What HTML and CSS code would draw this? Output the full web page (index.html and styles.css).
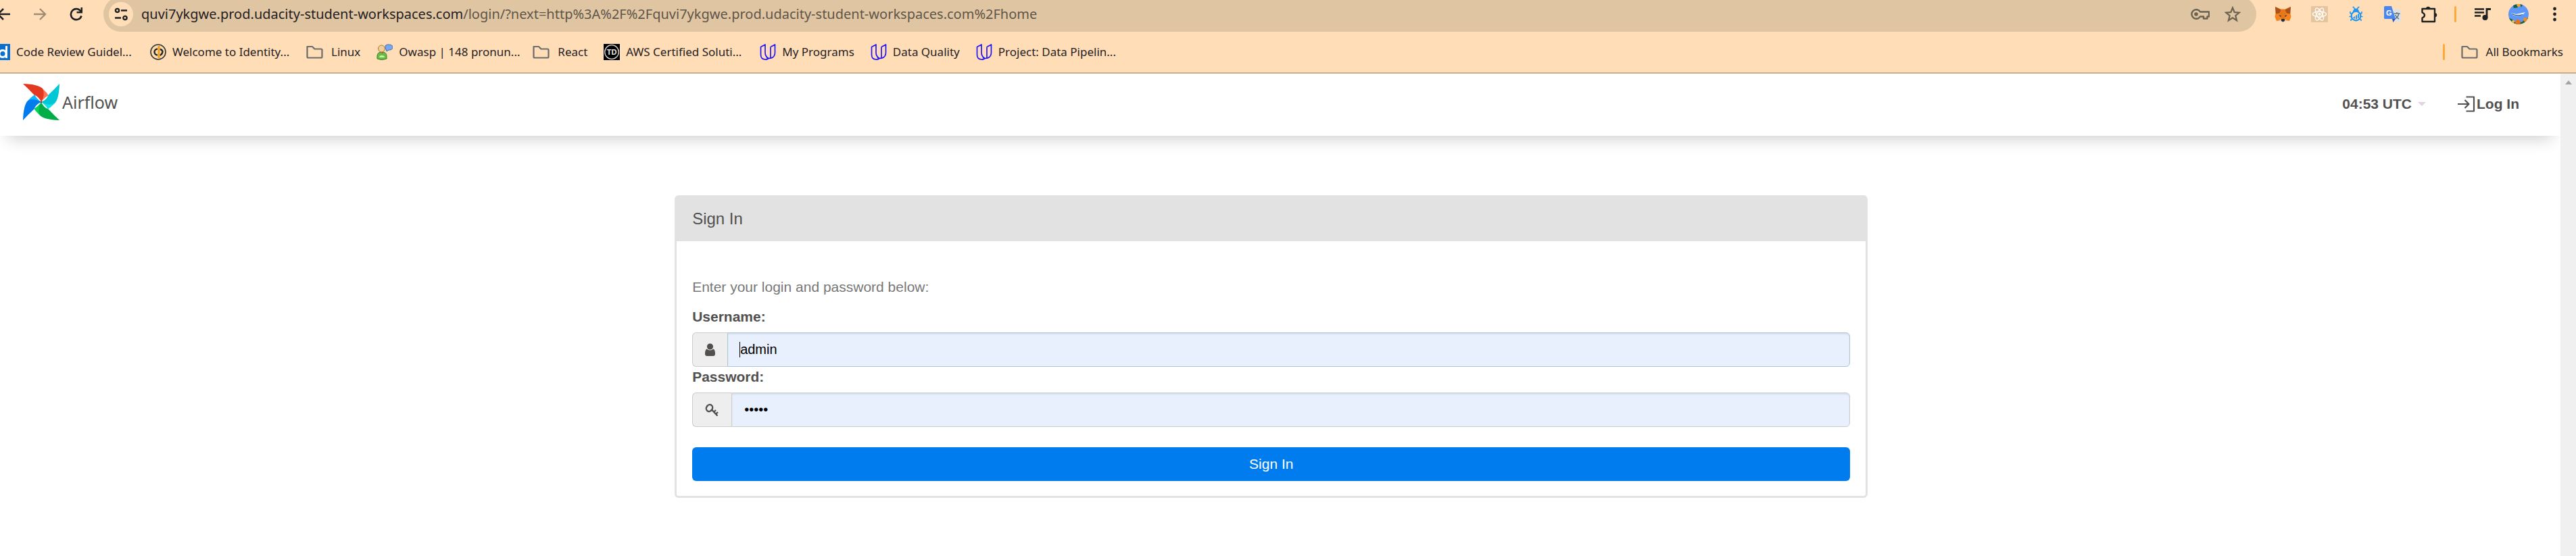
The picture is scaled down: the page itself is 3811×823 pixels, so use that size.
FILE: index.html
```html
<!DOCTYPE html>
<html lang="en">
<head>
<meta charset="utf-8">
<title>Airflow - Sign In</title>
<link rel="stylesheet" href="styles.css">
</head>
<body>
<svg class="defs" width="0" height="0" aria-hidden="true">
  <symbol id="folder" viewBox="0 0 25 24"><path d="M2 4h7l3.500 3.500H22q1.500 0 1.500 1.500V19q0 1.500-1.500 1.500H3Q1.500 20.500 1.500 19V4z" fill="none" stroke="#6b6b6b" stroke-width="2.200" stroke-linejoin="round"/></symbol>
  <symbol id="udacity" viewBox="0 0 24 24"><path d="M1.500 4.500 8 1v12q0 5.500 5 8.500-2 1.800-5 1.500-6.500-.5-6.500-7zM16 4.500 22.500 1v12q0 6-5.500 8-4 1.200-7-1M16 4.500v17" fill="none" stroke="#2015ff" stroke-width="1.700" stroke-linejoin="round"/></symbol>
</svg>
<header class="browser">
  <div class="toolbar">
    <nav class="history">
      <button aria-label="Back"><svg width="20" height="20" viewBox="0 0 20 20"><path d="M20 10H2M10 2l-8 8 8 8" fill="none" stroke="#1f2023" stroke-width="2.600"/></svg></button>
      <button aria-label="Forward"><svg width="20" height="20" viewBox="0 0 20 20"><path d="M1 10h17M10 2l8 8-8 8" fill="none" stroke="#a08c73" stroke-width="2.400"/></svg></button>
      <button aria-label="Reload"><svg width="20" height="20" viewBox="0 0 20 20"><path d="M17.500 12.500A8 8 0 1 1 17 6.500" fill="none" stroke="#1f2023" stroke-width="2.600"/><path d="M19 0v8.500h-8.500V6h6V0z" fill="#1f2023"/></svg></button>
    </nav>
    <div class="omnibox">
      <button class="site-info" aria-label="Site information"><svg width="20" height="20" viewBox="0 0 20 20"><g fill="none" stroke="#1f2023" stroke-width="2.400"><circle cx="4.500" cy="4.500" r="2.600"/><path d="M10 4.500h9M1 15.500h9"/><circle cx="16" cy="15.500" r="2.600"/></g></svg></button>
      <div class="url">quvi7ykgwe.prod.udacity-student-workspaces.com<span>/login/?next=http%3A%2F%2Fquvi7ykgwe.prod.udacity-student-workspaces.com%2Fhome</span></div>
      <div class="omnibox-actions">
        <button aria-label="Passwords"><svg width="28" height="24" viewBox="0 0 28 24"><path d="M14 8.500A6.800 6.800 0 1 0 14 15.500h5v3h5.500v-3H27v-7z" fill="none" stroke="#6c6252" stroke-width="2.400" stroke-linejoin="round"/><circle cx="8" cy="12" r="2.800" fill="#6c6252"/></svg></button>
        <button aria-label="Bookmark this tab"><svg width="24" height="24" viewBox="0 0 24 24"><path d="M12 2.500l2.700 6.600 7.100.5-5.500 4.600 1.800 7-6.100-3.900-6.100 3.900 1.800-7-5.500-4.600 7.100-.5z" fill="none" stroke="#6c6252" stroke-width="2.200"/></svg></button>
      </div>
    </div>
    <div class="extensions">
      <button aria-label="MetaMask"><svg width="25" height="24" viewBox="0 0 25 24"><path d="M1 1l8.500 3.500h6L24 1l-.5 10 1 5-2.500 6-6-.5h-7L3 22 .5 16l1-5z" fill="#f5841f"/><path d="M1 1l8.500 4.500-2 5L2 11.500zM24 1l-8.500 4.500 2 5 5.500 1z" fill="#a9501c"/><path d="M9.500 5h6l2 9-5 7-5-7z" fill="#e9761b"/><path d="M6 13l4 1.500-1 1.500zM19 13l-4 1.500 1 1.500z" fill="#333"/><path d="M10 19h5v3l-2.500 1.500L10 22z" fill="#2b2b2b"/><path d="M5 21.500l5-2v3zM20 21.500l-5-2v3z" fill="#d7c1b3"/></svg></button>
      <button aria-label="React Developer Tools"><svg width="25" height="24" viewBox="0 0 25 24"><rect width="25" height="24" rx="1" fill="#e3c59f"/><g fill="none" stroke="#fff8ef" stroke-width="1.500"><ellipse cx="12.500" cy="12" rx="10" ry="4"/><ellipse cx="12.500" cy="12" rx="10" ry="4" transform="rotate(60 12.500 12)"/><ellipse cx="12.500" cy="12" rx="10" ry="4" transform="rotate(120 12.500 12)"/></g><circle cx="12.500" cy="12" r="2.200" fill="#fff8ef"/></svg></button>
      <button aria-label="Bug tracker"><svg width="25" height="24" viewBox="0 0 25 24"><g fill="none" stroke="#1e96f5" stroke-width="1.600"><path d="M7.500 1.500H9l2 3.500M17.500 1.500H16l-2 3.500M4 8v2.500l3 1.500M21 8v2.500L18 12M2.500 15.500H6M22.500 15.500H19M5 22v-2l3-1M20 22v-2l-3-1"/><circle cx="12.500" cy="14.500" r="6.800" stroke-width="2.200"/></g><path d="M8 8.500a4.500 5 0 0 1 9 0zM8 17l3-2v4zM12 14l2-1v6l-2 .5zM15 12l2-1v6l-2 1.500z" fill="#1e96f5"/></svg></button>
      <button aria-label="Translate"><svg width="25" height="24" viewBox="0 0 25 24"><path d="M9 5h14.500q1.500 0 1.500 1.500V22q0 1.500-1.500 1.500H15z" fill="#e1e1e1"/><path d="M14.500 11h9M19 9v2M22 11q-1 5-6 8M16.500 13q2 4 5.500 6" fill="none" stroke="#607988" stroke-width="1.500"/><path d="M12 19h5l-3.500 5z" fill="#3352b8"/><path d="M1.500 0H11l6 19H1.500Q0 19 0 17.500v-16Q0 0 1.500 0z" fill="#4a86f0"/><text x="3" y="13.500" class="glyph-g">G</text></svg></button>
      <button aria-label="Extensions"><svg width="26" height="26" viewBox="0 0 26 26"><path d="M2.500 5H21v19H2.500v-5.500Q6 17 6 14.500T2.500 10.500z" fill="none" stroke="#1f2023" stroke-width="2.400" stroke-linejoin="round"/><path d="M8 4.500a3.300 3.300 0 0 1 6.500 0zM21.500 11a3.300 3.300 0 0 1 0 6.500z" fill="#1f2023"/></svg></button>
    </div>
    <div class="browser-controls">
      <i class="divider"></i>
      <button aria-label="Media control"><svg width="25" height="24" viewBox="0 0 25 24"><path d="M1 4.500h14M1 9.500h14M1 14.500h9" stroke="#1f2023" stroke-width="2.400"/><path d="M19 17V4.500h6" fill="none" stroke="#1f2023" stroke-width="2.800"/><circle cx="16.500" cy="17" r="4" fill="#1f2023"/></svg></button>
      <button aria-label="Profile"><svg width="30" height="30" viewBox="0 0 30 30"><clipPath id="round"><circle cx="15" cy="15" r="15"/></clipPath><g clip-path="url(#round)"><path d="M0 0h30v30H0z" fill="#5e97f6"/><path d="M4 13q6 3 12 1l9-2-4 4q-9 3-15 0z" fill="#e8f1ff"/><path d="M5 14.500q8 4 16 1" stroke="#27466b" fill="none"/><path d="M7 2l5-2 2 5-6 1zM17 0l4 1-2 4z" fill="#155d3b"/><circle cx="15" cy="1.500" r="2.500" fill="#f5a623"/><path d="M0 20l6 3 3 4 5-2 6 2 4-5 6-2v11H0z" fill="#17603c"/><circle cx="14" cy="27" r="4" fill="#e8711a"/><circle cx="25" cy="23" r="3" fill="#f58a1f"/><circle cx="7" cy="26" r="2" fill="#f9c32b"/></g></svg></button>
      <button aria-label="Menu"><svg width="25" height="24" viewBox="0 0 25 24"><g fill="#1f2023"><circle cx="12.500" cy="4" r="2.400"/><circle cx="12.500" cy="12" r="2.400"/><circle cx="12.500" cy="20" r="2.400"/></g></svg></button>
    </div>
  </div>
  <nav class="bookmarks">
    <a href="#" class="long"><svg width="24" height="24" viewBox="0 0 24 24"><path d="M0 0h24v24H0z" fill="#0a6fd2"/><circle cx="13" cy="14.500" r="5" fill="none" stroke="#fff" stroke-width="3"/><path d="M18.500 3v18" stroke="#fff" stroke-width="3"/></svg>Code Review Guidel...</a>
    <a href="#" class="long"><svg width="24" height="24" viewBox="0 0 24 24"><circle cx="12" cy="12" r="11" fill="#fbdcae" stroke="#333" stroke-width="1.600"/><path d="M11 7.500a4.500 4.500 0 1 0 0 9M14.500 17q4-2 4-6-1-3-4-3" fill="none" stroke="#222" stroke-width="2.400"/><path d="M13 3v18" stroke="#f79a1c" stroke-width="3"/></svg>Welcome to Identity...</a>
    <a href="#" class="folder"><svg width="25" height="24"><use href="#folder"/></svg>Linux</a>
    <a href="#" class="long"><svg width="24" height="24" viewBox="0 0 24 24"><path d="M1 22v-4q0-6 7-6t7 6v4q-7 3-14 0z" fill="#67bd42" stroke="#3c7c25"/><path d="M4 20q0-3 4-3t4 3z" fill="#c5f2a6"/><path d="M7 12h3l-1.500 3z" fill="#d84a2b"/><circle cx="7.500" cy="7" r="5" fill="#f3cf94" stroke="#a8793d"/><path d="M14 8l1 3 3-2q6 0 6-4t-6-4-5 4q0 2 1 3z" fill="#77a9f2" stroke="#3b65b9"/></svg>Owasp | 148 pronun...</a>
    <a href="#" class="folder"><svg width="25" height="24"><use href="#folder"/></svg>React</a>
    <a href="#" class="long"><svg width="24" height="24" viewBox="0 0 24 24"><path d="M0 0h24v24H0z"/><circle cx="12" cy="12" r="10.300" fill="none" stroke="#ddd" stroke-width="1.300"/><text x="12" y="16" text-anchor="middle" class="glyph-td">TD</text></svg>AWS Certified Soluti...</a>
    <a href="#"><svg width="24" height="24"><use href="#udacity"/></svg>My Programs</a>
    <a href="#"><svg width="24" height="24"><use href="#udacity"/></svg>Data Quality</a>
    <a href="#" class="long"><svg width="24" height="24"><use href="#udacity"/></svg>Project: Data Pipelin...</a>
    <i class="divider"></i>
    <a href="#" class="folder"><svg width="25" height="24"><use href="#folder"/></svg>All Bookmarks</a>
  </nav>
</header>
<div class="viewport">
  <div class="page">
    <nav class="navbar">
      <a href="#" class="brand"><svg width="54" height="54" viewBox="0 0 160 160">
        <path d="M80 80Q90 50 87 22Q104 38 112 51Q94 60 80 80z" fill="#ff7557"/>
        <path d="M80 80Q110 90 138 87Q122 104 109 112Q100 94 80 80z" fill="#11e1ee"/>
        <path d="M80 80Q70 110 73 138Q56 122 48 109Q66 100 80 80z" fill="#04d659"/>
        <path d="M80 80Q50 70 22 73Q38 56 51 48Q60 66 80 80z" fill="#0cb6ff"/>
        <path d="M0 0Q68 2 87 22Q98 48 80 80Q70 56 48 48Q26 24 0 0z" fill="#e43921"/>
        <path d="M160 0Q158 68 138 87Q112 98 80 80Q104 70 112 48Q136 26 160 0z" fill="#00c7d4"/>
        <path d="M160 160Q92 158 73 138Q62 112 80 80Q90 104 112 112Q134 136 160 160z" fill="#00ad46"/>
        <path d="M0 160Q2 92 22 73Q48 62 80 80Q56 90 48 112Q24 134 0 160z" fill="#017cee"/>
        <circle cx="80" cy="80" r="4" fill="#51504f"/></svg><span>Airflow</span></a>
      <button class="clock">04:53 UTC<i class="caret"></i></button>
      <a href="#" class="login"><svg width="26" height="24" viewBox="0 0 26 24"><path d="M0 12h16M10.500 6l6 6-6 6M12.500 1.500H24v21H12.500" fill="none" stroke="#51504f" stroke-width="2.200" stroke-linejoin="round"/></svg>Log In</a>
    </nav>
    <main>
      <form class="panel">
        <h1>Sign In</h1>
        <div class="panel-body">
          <p>Enter your login and password below:</p>
          <label for="username">Username:</label>
          <div class="field focused">
            <span class="addon"><svg width="15" height="20" viewBox="0 0 15 20"><circle cx="7.500" cy="5" r="4.600" fill="#51504f"/><path d="M2.500 8.500q5 4 10 0 2.500 1.500 2.500 7 0 3.500-3 3.500H3q-3 0-3-3.500 0-5.500 2.500-7z" fill="#51504f"/></svg></span>
            <div class="control"><input id="username" type="text" value="admin"><i class="text-cursor"></i></div>
          </div>
          <label for="password">Password:</label>
          <div class="field">
            <span class="addon"><svg width="21" height="20" viewBox="0 0 21 20"><ellipse cx="6.500" cy="7" rx="4.400" ry="5.200" transform="rotate(35 6.500 7)" fill="none" stroke="#51504f" stroke-width="2.400"/><path d="M10 9.500l8.500 9M13 13l3-3M16 16l3-3" fill="none" stroke="#51504f" stroke-width="2.400"/></svg></span>
            <div class="control"><input id="password" type="password" value="admin"></div>
          </div>
          <button type="submit">Sign In</button>
        </div>
      </form>
    </main>
  </div>
  <div class="scrollbar"><i></i></div>
</div>
</body>
</html>
```
FILE: styles.css
```css
* { box-sizing: border-box; }
html, body { height: 100%; }
body {
  margin: 0;
  display: flex;
  flex-direction: column;
  overflow: hidden;
  background: #fff;
  color: #51504f;
  font: 21px/30px "Liberation Sans", Arial, sans-serif;
}
button { margin: 0; padding: 0; border: 0; background: none; font: inherit; color: inherit; }
a { color: inherit; text-decoration: none; }
svg { display: block; flex: none; }
.defs { position: absolute; }

.browser {
  background: #ffdeb7;
  border-bottom: 2px solid #c9ae89;
  color: #1f2023;
  font-family: "Noto Sans", "Open Sans", sans-serif;
  overflow: hidden;
}
.toolbar { display: flex; height: 52px; margin-top: -5px; align-items: center; }
.history { display: flex; gap: 34px; margin-left: -5px; margin-right: 30px; }
.omnibox {
  flex: 1;
  display: flex;
  align-items: center;
  height: 52px;
  padding: 0 23px 0 8px;
  border-radius: 26px;
  background: #dfc5a1;
}
.site-info {
  display: grid;
  place-items: center;
  width: 36px;
  height: 36px;
  margin-right: 12px;
  border-radius: 50%;
  background: #ffdeb7;
}
.url { flex: 1; font-size: 20px; white-space: nowrap; }
.url span { color: #5f554a; }
.omnibox-actions { display: flex; gap: 22px; align-items: center; }
.extensions { display: flex; align-items: center; gap: 29px; margin: 0 24px 0 27px; }
.browser-controls { display: flex; align-items: center; gap: 26px; margin-right: 19px; }
.divider { width: 3px; height: 24px; border-radius: 2px; background: #ffa93a; }

.bookmarks {
  display: flex;
  height: 60px;
  align-items: center;
  gap: 24px;
  padding-right: 19px;
  margin-left: -9px;
  font-size: 17px;
  white-space: nowrap;
}
.bookmarks a { display: flex; align-items: center; gap: 9px; }
.bookmarks .folder { gap: 12px; }
.bookmarks .long { width: 207px; }
.bookmarks .divider { margin-left: auto; }
.glyph-g { font: bold 11px "Liberation Sans", sans-serif; fill: #fff; }
.glyph-td { font: bold 11px "Liberation Sans", sans-serif; fill: #eee; }

.viewport { flex: 1; display: flex; min-height: 0; }
.page { flex: 1; }
.scrollbar { width: 23px; padding-top: 10px; background: #f0f0f0; z-index: 1; }
.scrollbar i { display: block; width: 10px; margin: 0 auto; border: 5px solid transparent; border-top: 0; border-bottom: 6px solid #a3a3a3; }
.navbar {
  display: flex;
  align-items: center;
  height: 92px;
  padding: 15px 61px 18px 34px;
  box-shadow: 0 16px 24px -12px rgba(0, 0, 0, .2);
  font-weight: bold;
}
.brand {
  display: flex;
  align-self: flex-start;
  align-items: center;
  gap: 4px;
  margin-right: auto;
  font: 25px/34px "Noto Sans", sans-serif;
}
.clock { display: flex; align-items: center; gap: 9px; font-weight: bold; margin-right: 47px; }
.caret { border: 6px solid transparent; border-top-color: #e3d3e4; border-bottom: 0; }
.login { display: flex; align-items: center; gap: 2px; }

main { padding-top: 88px; }
.panel { width: 46.6%; margin: 0 0 0 26.35%; border: 3px solid #e2e2e2; border-radius: 6px; }
.panel h1 { margin: 0; padding: 17px 23px 18px; background: #e2e2e2; font-size: 24px; line-height: 30px; font-weight: normal; }
.panel-body { display: flex; flex-direction: column; padding: 53px 23px 22px; }
.panel p { margin: 0 0 14px; color: #777; }
.panel label { font-weight: bold; margin-bottom: 8px; }
.field { display: flex; height: 51px; }
.addon { display: grid; place-items: center; padding: 0 18px; border: 1px solid #ccc; border-right: 0; border-radius: 6px 0 0 6px; background: #eee; }
.control { flex: 1; position: relative; }
.control input {
  display: block;
  width: 100%;
  height: 100%;
  padding: 0 18px;
  border: 1px solid #ccc;
  border-radius: 0 6px 6px 0;
  outline: 0;
  background: #e8f0fe;
  box-shadow: inset 0 2px 2px rgba(0, 0, 0, .08);
  color: #000;
  font: inherit;
  font-size: 20px;
}
.focused input { border-color: #aec5d4; }
.text-cursor { position: absolute; left: 18px; top: 14px; width: 1px; height: 23px; background: #000; }
.panel button { height: 50px; margin-top: 30px; border-radius: 6px; background: #017cee; color: #fff; }
```
